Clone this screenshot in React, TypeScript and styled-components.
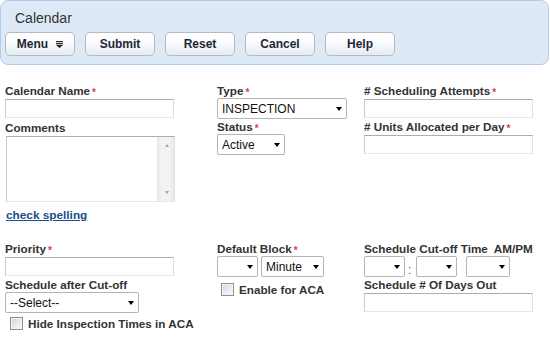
import React from "react";
import styled, { createGlobalStyle } from "styled-components";

const Global = createGlobalStyle`
  html, body { margin: 0; padding: 0; background: #ffffff; }
  body { font-family: "Liberation Sans", Arial, sans-serif; font-size: 12px; color: #333; }
`;

const Header = styled.header`
  box-sizing: border-box;
  width: 549px;
  height: 65px;
  background: #dde9f7;
  border: 1px solid #b3cbe8;
  border-radius: 8px;
  padding: 9px 0 0 4px;
  display: flex;
  flex-direction: column;
  gap: 6px;
`;

const Title = styled.h1`
  margin: 0 0 0 10px;
  font-size: 14px;
  line-height: 16px;
  font-weight: normal;
  color: #333;
`;

const Toolbar = styled.div`
  display: flex;
  gap: 10px;
`;

const ToolButton = styled.button`
  box-sizing: border-box;
  width: 70px;
  height: 24px;
  padding: 0;
  border: 1px solid #b9b9b9;
  border-radius: 5px;
  background: linear-gradient(#ffffff, #fafcfe 40%, #e4ebf4);
  font-family: "Liberation Sans", Arial, sans-serif;
  font-size: 12px;
  font-weight: bold;
  color: #1f2733;
  display: inline-flex;
  align-items: center;
  justify-content: center;
  gap: 8px;
`;

const Form = styled.form`
  margin: 19px 0 0 0;
`;

const Section = styled.div<{ $mt?: number }>`
  display: grid;
  grid-template-columns: 212px 147px 1fr;
  padding-left: 5px;
  align-items: start;
  margin-top: ${(p) => p.$mt ?? 0}px;
`;

const Column = styled.div<{ $gap: number }>`
  display: flex;
  flex-direction: column;
  gap: ${(p) => p.$gap}px;
`;

const Field = styled.div`
  display: flex;
  flex-direction: column;
`;

const Label = styled.label`
  display: block;
  height: 14px;
  line-height: 14px;
  font-size: 11.7px;
  font-weight: bold;
  color: #333;
  white-space: nowrap;
`;

const Req = styled.span`
  color: #e4393c;
  font-size: 10px;
  margin-left: 2px;
  vertical-align: -1px;
`;

const TextInput = styled.input<{ $w?: number }>`
  box-sizing: border-box;
  width: ${(p) => p.$w ?? 169}px;
  height: 19px;
  margin: 1px 0 0 0;
  padding: 0 3px;
  border: 1px solid;
  border-color: #abadb3 #dbdfe6 #e3e9ef #c9cbd0;
  background: #fff;
  font-family: "Liberation Sans", Arial, sans-serif;
  font-size: 12px;
  outline: none;
`;

const TextAreaFrame = styled.div`
  box-sizing: border-box;
  width: 169px;
  height: 66px;
  margin: 1px 0 0 1px;
  border: 1px solid;
  border-color: #abadb3 #dbdfe6 #e3e9ef #c9cbd0;
  display: flex;
  background: #fff;
`;

const TextArea = styled.textarea`
  flex: 1;
  border: none;
  resize: none;
  outline: none;
  padding: 2px;
  margin: 0;
  font-family: "Liberation Sans", Arial, sans-serif;
  font-size: 12px;
  overflow: hidden;
`;

const FakeScroll = styled.div`
  width: 17px;
  display: flex;
  flex-direction: column;
  justify-content: space-between;
  align-items: center;
  padding: 7px 0 7px 3px;
  box-sizing: border-box;
  background: linear-gradient(to right, #e6e6e6, #f3f3f3 25%, #f3f3f3 75%, #e8e8e8);
`;

const ScrollArrow = styled.span<{ $dir: "up" | "down" }>`
  width: 0;
  height: 0;
  border-left: 2.5px solid transparent;
  border-right: 2.5px solid transparent;
  ${(p) =>
    p.$dir === "up"
      ? "border-bottom: 3px solid #a6a6a6;"
      : "border-top: 3px solid #a6a6a6;"}
`;

const SpellLink = styled.a`
  align-self: flex-start;
  margin: 3px 0 0 1px;
  line-height: 14px;
  font-size: 11.8px;
  font-weight: bold;
  color: #1a4f8c;
  text-decoration: underline;
`;

const SelectWrap = styled.div<{ $w: number }>`
  position: relative;
  width: ${(p) => p.$w}px;
  height: 21px;
  &::after {
    content: "";
    position: absolute;
    right: 5px;
    top: calc(50% - 1.5px);
    width: 0;
    height: 0;
    border-left: 3.5px solid transparent;
    border-right: 3.5px solid transparent;
    border-top: 4px solid #000;
    pointer-events: none;
  }
`;

const Select = styled.select`
  appearance: none;
  -webkit-appearance: none;
  box-sizing: border-box;
  width: 100%;
  height: 21px;
  margin: 0;
  padding: 0 14px 0 4px;
  border: 1px solid #b5b5b5;
  border-radius: 2px;
  background: #fff;
  font-family: "Liberation Sans", Arial, sans-serif;
  font-size: 12px;
  color: #111;
  outline: none;
`;

const ControlRow = styled.div<{ $gap?: number }>`
  display: flex;
  gap: ${(p) => p.$gap ?? 0}px;
`;

const Colon = styled.span`
  align-self: flex-end;
  line-height: 14px;
  font-size: 12px;
  color: #555;
  margin: 0 5px 0 3px;
`;

const Spacer = styled.span<{ $w: number }>`
  width: ${(p) => p.$w}px;
  flex: none;
`;

const CheckRow = styled.div<{ $mt: number; $ml: number }>`
  display: flex;
  align-items: flex-start;
  gap: 5px;
  margin: ${(p) => p.$mt}px 0 0 ${(p) => p.$ml}px;
`;

const Check = styled.input`
  appearance: none;
  -webkit-appearance: none;
  box-sizing: border-box;
  width: 13px;
  height: 13px;
  margin: 0;
  border: 1px solid #8f8f8f;
  background: linear-gradient(135deg, #d2d2d2, #eeeeee 60%, #f8f8f8);
  box-shadow: inset 0 0 0 1px #f4f4f4;
  flex: none;
`;

const CheckText = styled.span`
  line-height: 14px;
  font-size: 11.7px;
  font-weight: bold;
  color: #333;
  white-space: nowrap;
`;

const MenuIcon = () => (
  <svg width="7" height="7" viewBox="0 0 7 7" aria-hidden="true">
    <rect x="0" y="0" width="7" height="1.2" fill="#222" />
    <rect x="0" y="2.1" width="7" height="1.2" fill="#222" />
    <polygon points="0,3.9 7,3.9 3.5,7" fill="#222" />
  </svg>
);

const Req1 = () => <Req>*</Req>;

const Dropdown = ({ w, options, value }: { w: number; options: string[]; value?: string }) => (
  <SelectWrap $w={w}>
    <Select defaultValue={value ?? options[0]}>
      {options.map((o) => (
        <option key={o} value={o}>
          {o}
        </option>
      ))}
    </Select>
  </SelectWrap>
);

export default function App() {
  return (
    <>
      <Global />
      <Header>
        <Title>Calendar</Title>
        <Toolbar>
          <ToolButton type="button">
            Menu <MenuIcon />
          </ToolButton>
          <ToolButton type="button">Submit</ToolButton>
          <ToolButton type="button">Reset</ToolButton>
          <ToolButton type="button">Cancel</ToolButton>
          <ToolButton type="button">Help</ToolButton>
        </Toolbar>
      </Header>
      <Form onSubmit={(e) => e.preventDefault()}>
        <Section>
          <Column $gap={3}>
            <Field>
              <Label>
                Calendar Name<Req1 />
              </Label>
              <TextInput />
            </Field>
            <Field>
              <Label>Comments</Label>
              <TextAreaFrame>
                <TextArea />
                <FakeScroll>
                  <ScrollArrow $dir="up" />
                  <ScrollArrow $dir="down" />
                </FakeScroll>
              </TextAreaFrame>
            </Field>
            <SpellLink href="#">check spelling</SpellLink>
          </Column>
          <Column $gap={1}>
            <Field>
              <Label>
                Type<Req1 />
              </Label>
              <Dropdown w={130} options={["INSPECTION", "GENERAL"]} />
            </Field>
            <Field>
              <Label>
                Status<Req1 />
              </Label>
              <Dropdown w={68} options={["Active", "Inactive"]} />
            </Field>
          </Column>
          <Column $gap={2}>
            <Field>
              <Label>
                # Scheduling Attempts<Req1 />
              </Label>
              <TextInput />
            </Field>
            <Field>
              <Label>
                # Units Allocated per Day<Req1 />
              </Label>
              <TextInput />
            </Field>
          </Column>
        </Section>
        <Section $mt={20}>
          <Column $gap={2}>
            <Field>
              <Label>
                Priority<Req1 />
              </Label>
              <TextInput />
            </Field>
            <Field>
              <Label>Schedule after Cut-off</Label>
              <Dropdown w={134} options={["--Select--", "Next Day"]} />
              <CheckRow $mt={4} $ml={5}>
                <Check type="checkbox" />
                <CheckText>Hide Inspection Times in ACA</CheckText>
              </CheckRow>
            </Field>
          </Column>
          <Column $gap={1}>
            <Field>
              <Label>
                Default Block<Req1 />
              </Label>
              <ControlRow $gap={3}>
                <Dropdown w={41} options={[""]} />
                <Dropdown w={63} options={["Minute", "Hour"]} />
              </ControlRow>
              <CheckRow $mt={6} $ml={4}>
                <Check type="checkbox" />
                <CheckText>Enable for ACA</CheckText>
              </CheckRow>
            </Field>
          </Column>
          <Column $gap={1}>
            <Field>
              <Label>{"Schedule Cut-off Time\u00a0 AM/PM"}</Label>
              <ControlRow>
                <Dropdown w={41} options={[""]} />
                <Colon>:</Colon>
                <Dropdown w={41} options={[""]} />
                <Spacer $w={9} />
                <Dropdown w={44} options={[""]} />
              </ControlRow>
            </Field>
            <Field>
              <Label>Schedule # Of Days Out</Label>
              <TextInput />
            </Field>
          </Column>
        </Section>
      </Form>
    </>
  );
}
